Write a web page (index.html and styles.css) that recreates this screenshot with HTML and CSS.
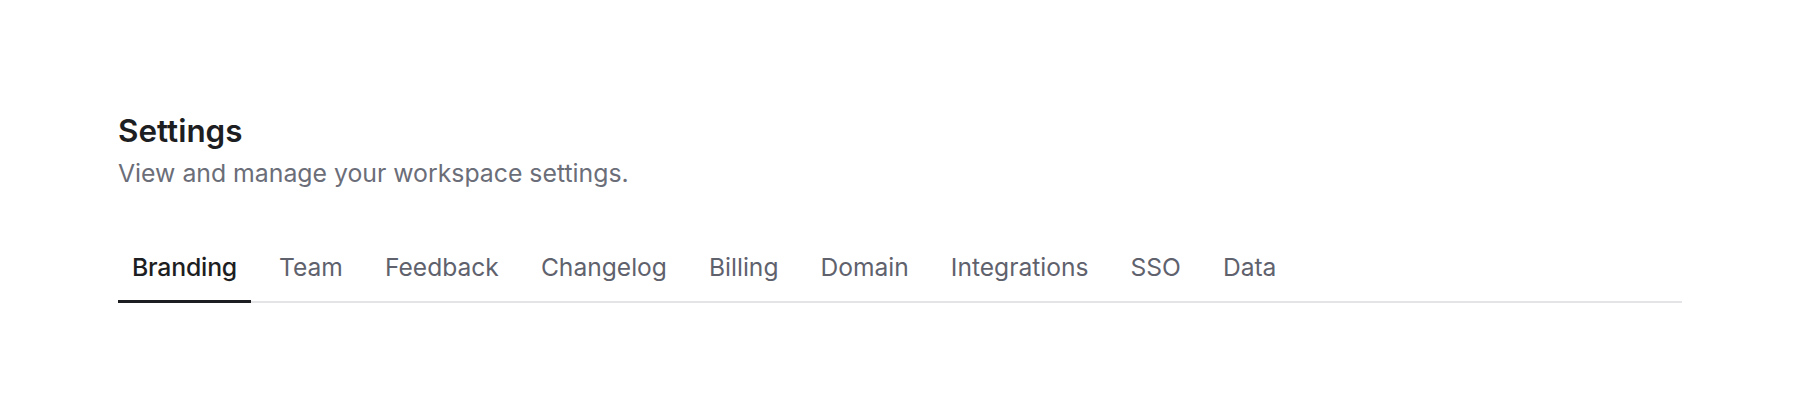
FILE: index.html
```html
<!DOCTYPE html>
<html lang="en">
<head>
<meta charset="utf-8">
<title>Settings</title>
<link rel="stylesheet" href="styles.css">
</head>
<body>
<main class="page">
  <header class="page-header">
    <h1 class="title">Settings</h1>
    <p class="subtitle">View and manage your workspace settings.</p>
  </header>
  <nav class="tabs">
    <a class="tab active" href="#">Branding</a>
    <a class="tab" href="#">Team</a>
    <a class="tab" href="#">Feedback</a>
    <a class="tab" href="#">Changelog</a>
    <a class="tab" href="#">Billing</a>
    <a class="tab" href="#">Domain</a>
    <a class="tab" href="#">Integrations</a>
    <a class="tab" href="#">SSO</a>
    <a class="tab" href="#">Data</a>
  </nav>
</main>
</body>
</html>
```
FILE: styles.css
```css
html, body {
  margin: 0;
  padding: 0;
  background: #ffffff;
}
body {
  font-family: Inter, "Noto Sans", "Liberation Sans", sans-serif;
  width: 1800px;
  height: 420px;
}
.page {
  padding: 112px 118px 0;
}
.page-header {
  display: flex;
  flex-direction: column;
}
.title {
  margin: 0;
  font-size: 31.4px;
  line-height: 38px;
  font-weight: 600;
  color: #1d1e22;
}
.subtitle {
  margin: 6px 0 0;
  font-size: 24.8px;
  line-height: 34px;
  font-weight: 400;
  color: #6b6e78;
}
.tabs {
  display: flex;
  gap: 14px;
  margin-top: 52px;
  box-shadow: inset 0 -2px 0 #e4e4e7;
}
.tab {
  display: block;
  padding: 8px 14px 16px;
  font-size: 24.6px;
  line-height: 34px;
  font-weight: 400;
  color: #5f626d;
  text-decoration: none;
  border-bottom: 3px solid transparent;
}
.tab.active {
  font-size: 24.8px;
  font-weight: 500;
  letter-spacing: -0.2px;
  color: #1d1e22;
  border-bottom-color: #1d1e22;
}
```
